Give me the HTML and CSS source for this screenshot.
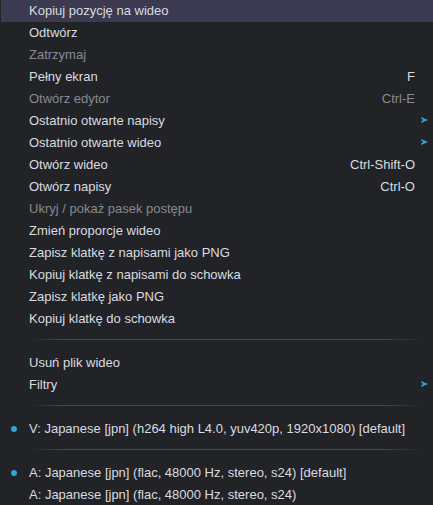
FILE: index.html
```html
<!DOCTYPE html>
<html>
<head>
<meta charset="utf-8">
<link rel="stylesheet" href="styles.css">
</head>
<body>
<div class="menu">
  <div class="item active"><span class="label">Kopiuj pozycję na wideo</span></div>
  <div class="item"><span class="label">Odtwórz</span></div>
  <div class="item disabled"><span class="label">Zatrzymaj</span></div>
  <div class="item"><span class="label">Pełny ekran</span><span class="key">F</span></div>
  <div class="item disabled"><span class="label">Otwórz edytor</span><span class="key">Ctrl-E</span></div>
  <div class="item"><span class="label">Ostatnio otwarte napisy</span><span class="arrow"></span></div>
  <div class="item"><span class="label">Ostatnio otwarte wideo</span><span class="arrow"></span></div>
  <div class="item"><span class="label">Otwórz wideo</span><span class="key">Ctrl-Shift-O</span></div>
  <div class="item"><span class="label">Otwórz napisy</span><span class="key">Ctrl-O</span></div>
  <div class="item disabled"><span class="label">Ukryj / pokaż pasek postępu</span></div>
  <div class="item"><span class="label">Zmień proporcje wideo</span></div>
  <div class="item"><span class="label">Zapisz klatkę z napisami jako PNG</span></div>
  <div class="item"><span class="label">Kopiuj klatkę z napisami do schowka</span></div>
  <div class="item"><span class="label">Zapisz klatkę jako PNG</span></div>
  <div class="item"><span class="label">Kopiuj klatkę do schowka</span></div>
  <div class="sep"></div>
  <div class="item"><span class="label">Usuń plik wideo</span></div>
  <div class="item"><span class="label">Filtry</span><span class="arrow"></span></div>
  <div class="sep"></div>
  <div class="item checked"><span class="label">V: Japanese [jpn] (h264 high L4.0, yuv420p, 1920x1080) [default]</span></div>
  <div class="sep"></div>
  <div class="item checked"><span class="label">A: Japanese [jpn] (flac, 48000 Hz, stereo, s24) [default]</span></div>
  <div class="item"><span class="label">A: Japanese [jpn] (flac, 48000 Hz, stereo, s24)</span></div>
</div>
</body>
</html>
```

FILE: styles.css
```css
html, body {
  margin: 0;
  padding: 0;
  background: #222327;
}
body {
  width: 433px;
  height: 505px;
  overflow: hidden;
  font-family: "Liberation Sans", Arial, sans-serif;
  font-size: 13px;
}
.menu {
  display: flex;
  flex-direction: column;
}
.item {
  position: relative;
  height: 22px;
  box-sizing: border-box;
  display: flex;
  align-items: center;
  padding: 0 18px 2px 28px;
  margin-left: 1px;
  color: #d9dce0;
  white-space: nowrap;
}
.item.active {
  background: #3b3a50;
}
.item.disabled {
  color: #878a8f;
}
.label {
  flex: 1;
}
.arrow {
  position: absolute;
  right: 5px;
  top: 7px;
  width: 0;
  height: 0;
  border-left: 7px solid #2ea6d8;
  border-top: 3.5px solid transparent;
  border-bottom: 3.5px solid transparent;
}
.arrow::after {
  content: "";
  position: absolute;
  left: -7px;
  top: -2px;
  width: 0;
  height: 0;
  border-left: 2px solid #222327;
  border-top: 2px solid transparent;
  border-bottom: 2px solid transparent;
}
.checked::before {
  content: "";
  position: absolute;
  left: 10px;
  top: 8px;
  width: 6px;
  height: 6px;
  border-radius: 50%;
  background: #2aa7dc;
}
.sep {
  height: 22px;
  display: flex;
  align-items: center;
  padding: 0 10px 0 30px;
}
.sep::after {
  content: "";
  flex: 1;
  height: 1px;
  margin-top: -4px;
  background: linear-gradient(to right, rgba(70,71,76,0) 0%, #46474c 8%, #46474c 90%, rgba(70,71,76,0) 100%);
}
```
